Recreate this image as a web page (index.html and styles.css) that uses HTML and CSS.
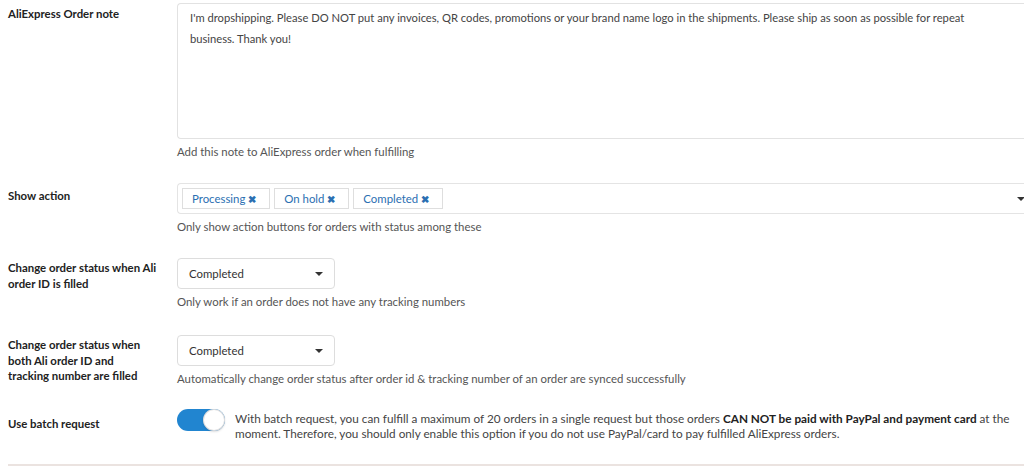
FILE: index.html
```html
<!DOCTYPE html>
<html lang="en">
  <head>
    <meta charset="UTF-8" />
    <meta name="viewport" content="width=device-width, initial-scale=1.0" />
    <title>Fulfill settings</title>
    <link rel="stylesheet" href="styles.css">
  </head>
  <body>
    <div class="settings">
      <div class="row row-note">
        <div class="label">AliExpress Order note</div>
        <div class="field">
          <div class="textarea">I'm dropshipping. Please DO NOT put any invoices, QR codes, promotions or your brand name logo in the shipments. Please ship as soon as possible for repeat business. Thank you!</div>
          <p class="help">Add this note to AliExpress order when fulfilling</p>
        </div>
      </div>

      <div class="row row-action">
        <div class="label">Show action</div>
        <div class="field">
          <div class="multi">
            <span class="tag">Processing <b>&#x2716;</b></span>
            <span class="tag">On hold <b>&#x2716;</b></span>
            <span class="tag">Completed <b>&#x2716;</b></span>
            <span class="caret"></span>
          </div>
          <p class="help">Only show action buttons for orders with status among these</p>
        </div>
      </div>

      <div class="row row-status">
        <div class="label">Change order status when Ali order ID is filled</div>
        <div class="field">
          <div class="select">Completed <span class="caret"></span></div>
          <p class="help">Only work if an order does not have any tracking numbers</p>
        </div>
      </div>

      <div class="row row-status2">
        <div class="label">Change order status when both Ali order ID and tracking number are filled</div>
        <div class="field">
          <div class="select">Completed <span class="caret"></span></div>
          <p class="help">Automatically change order status after order id &amp; tracking number of an order are synced successfully</p>
        </div>
      </div>

      <div class="row row-batch">
        <div class="label">Use batch request</div>
        <div class="field field-toggle">
          <span class="toggle"><span class="knob"></span></span>
          <p class="toggle-text">With batch request, you can fulfill a maximum of 20 orders in a single request but those orders <strong>CAN NOT be paid with PayPal and payment card</strong> at the moment. Therefore, you should only enable this option if you do not use PayPal/card to pay fulfilled AliExpress orders.</p>
        </div>
      </div>
    </div>
  </body>
</html>
```

FILE: styles.css
```css
body {
  margin: 0;
  background: #fff;
  font-family: Lato, "Open Sans", sans-serif;
  font-size: 11.4px;
  color: #333;
  overflow: hidden;
}

.settings {
  margin-left: 8px;
  border-bottom: 2px solid #ebe3e0;
  width: 1100px;
}

.row {
  display: flex;
}

.label {
  width: 149px;
  margin-right: 20px;
  font-weight: 700;
  color: #222;
  line-height: 15.5px;
  padding-top: 3px;
}

.field {
  flex: 1;
}

.help {
  margin: 5px 0 0;
  color: #555;
  line-height: 15px;
}

.row-note {
  padding-top: 3px;
}

.textarea {
  box-sizing: border-box;
  height: 136px;
  width: 860px;
  border: 1px solid #e2e2e2;
  border-right: 0;
  border-radius: 4px 0 0 4px;
  padding: 3px 38px 3px 12px;
  color: #444;
  font-size: 11.2px;
  line-height: 21px;
}

.row-action {
  padding-top: 24px;
}

.row-action .label {
  padding-top: 5px;
}

.multi {
  position: relative;
  box-sizing: border-box;
  height: 31px;
  width: 852px;
  border: 1px solid #e4e4e4;
  border-right: 0;
  border-radius: 4px 0 0 4px;
  padding: 4px 4px;
  display: flex;
  gap: 4px;
}

.tag {
  box-sizing: border-box;
  height: 21px;
  border: 1px solid #dedede;
  padding: 2px 13px 2px 9px;
  color: #2b6fb2;
  line-height: 15px;
}

.tag b {
  font-size: 10px;
}

.multi .caret {
  position: absolute;
  right: 4px;
  top: 13px;
}

.caret {
  display: inline-block;
  width: 0;
  height: 0;
  border-left: 4px solid transparent;
  border-right: 4px solid transparent;
  border-top: 4px solid #333;
}

.row-status {
  padding-top: 24px;
}

.row-status .label,
.row-status2 .label {
  padding-top: 2px;
}

.select {
  box-sizing: border-box;
  width: 158px;
  height: 31px;
  border: 1px solid #ddd;
  border-radius: 4px;
  padding: 0 11px;
  display: flex;
  align-items: center;
  justify-content: space-between;
  color: #333;
}

.row-status2 {
  padding-top: 26px;
}

.row-batch {
  padding-top: 23px;
  padding-bottom: 23px;
}

.row-batch .label {
  padding-top: 7px;
}

.field-toggle {
  display: flex;
  align-items: flex-start;
}

.toggle {
  position: relative;
  flex: none;
  width: 48px;
  height: 22px;
  border-radius: 11px;
  background: #2185d0;
  margin-right: 10px;
}

.knob {
  position: absolute;
  right: 0;
  top: 0;
  width: 22px;
  height: 22px;
  border-radius: 50%;
  background: #fff;
  box-shadow: 0 1px 2px rgba(34, 36, 38, 0.15), 0 0 0 1px rgba(34, 36, 38, 0.15) inset;
}

.toggle-text {
  margin: 2px 0 0;
  width: 790px;
  color: #444;
  font-size: 11.75px;
  line-height: 15px;
}

.toggle-text strong {
  color: #222;
}
```
